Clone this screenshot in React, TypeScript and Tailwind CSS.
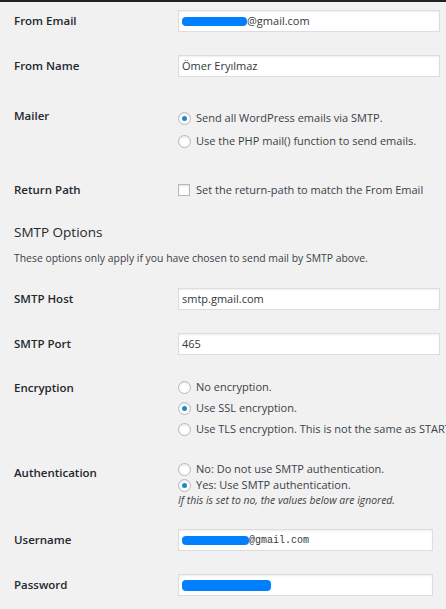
import React from 'react';

function Label({ children, className = '' }: { children: React.ReactNode; className?: string }) {
  return (
    <div className={`w-[178px] shrink-0 pl-[14px] text-[11.5px] font-semibold text-[#23282d] ${className}`}>
      {children}
    </div>
  );
}

function TextInput({ children, wide = true, mono = false }: { children: React.ReactNode; wide?: boolean; mono?: boolean }) {
  return (
    <div
      className={`h-[22px] ${wide ? 'w-[262px]' : 'w-[255px]'} shrink-0 bg-white border border-[#dddddd] shadow-[inset_0_1px_2px_rgba(0,0,0,0.07)] flex items-center px-[3px] whitespace-nowrap text-[#32373c] ${
        mono ? "font-['Liberation_Mono',monospace] text-[10px]" : 'text-[11px]'
      }`}
    >
      {children}
    </div>
  );
}

function Blot({ w, h = 9 }: { w: number; h?: number }) {
  return <span className="inline-block bg-[#0080ff] rounded-[4px]" style={{ width: w, height: h }} />;
}

function Radio({ checked, children, line }: { checked?: boolean; children: React.ReactNode; line: string }) {
  return (
    <div className={`flex items-center ${line} whitespace-nowrap`}>
      <span className="w-[13px] h-[13px] shrink-0 rounded-full bg-white border border-[#b4b9be] shadow-[inset_0_1px_2px_rgba(0,0,0,0.1)] flex items-center justify-center">
        {checked && <span className="w-[5px] h-[5px] rounded-full bg-[#1e8cbe]" />}
      </span>
      <span className="ml-[5px] text-[11px] text-[#3c4146]">{children}</span>
    </div>
  );
}

export default function App() {
  return (
    <div className="w-[446px] h-[609px] overflow-hidden bg-[#f1f1f1] border-t-2 border-[#222222] font-['Open_Sans',sans-serif] text-[#3c4146]">
      <div className="flex items-center mt-[8px]">
        <Label>From Email</Label>
        <TextInput>
          <Blot w={65} />
          <span>@gmail.com</span>
        </TextInput>
      </div>

      <div className="flex items-center mt-[23px]">
        <Label>From Name</Label>
        <TextInput>Ömer Eryılmaz</TextInput>
      </div>

      <div className="flex items-start mt-[30px]">
        <Label className="leading-[18px]">Mailer</Label>
        <div className="flex flex-col">
          <Radio checked line="h-[23px]">Send all WordPress emails via SMTP.</Radio>
          <Radio line="h-[23px]">Use the PHP mail() function to send emails.</Radio>
        </div>
      </div>

      <div className="flex items-center h-[22px] mt-[26px]">
        <Label>Return Path</Label>
        <div className="flex items-center whitespace-nowrap">
          <span className="w-[12px] h-[12px] shrink-0 bg-white border border-[#b4b9be] shadow-[inset_0_1px_2px_rgba(0,0,0,0.1)]" />
          <span className="ml-[6px] text-[11px]">Set the return-path to match the From Email</span>
        </div>
      </div>

      <h3 className="mt-[20px] pl-[14px] text-[13.5px] leading-[22px] text-[#23282d]">SMTP Options</h3>
      <p className="mt-[7px] pl-[14px] text-[10.4px] leading-[16px] whitespace-nowrap">
        These options only apply if you have chosen to send mail by SMTP above.
      </p>

      <div className="flex items-center mt-[22px]">
        <Label>SMTP Host</Label>
        <TextInput>smtp.gmail.com</TextInput>
      </div>

      <div className="flex items-center mt-[23px]">
        <Label>SMTP Port</Label>
        <TextInput>465</TextInput>
      </div>

      <div className="flex items-start mt-[22px]">
        <Label className="leading-[21px]">Encryption</Label>
        <div className="flex flex-col">
          <Radio line="h-[21px]">No encryption.</Radio>
          <Radio checked line="h-[21px]">Use SSL encryption.</Radio>
          <Radio line="h-[21px]">Use TLS encryption. This is not the same as STARTTLS.</Radio>
        </div>
      </div>

      <div className="flex items-start mt-[21px]">
        <Label className="leading-[24px]">Authentication</Label>
        <div className="flex flex-col">
          <Radio line="h-[16px]">No: Do not use SMTP authentication.</Radio>
          <Radio checked line="h-[16px]">Yes: Use SMTP authentication.</Radio>
          <p className="text-[10.4px] leading-[14px] italic whitespace-nowrap">
            If this is set to no, the values below are ignored.
          </p>
        </div>
      </div>

      <div className="flex items-center mt-[22px]">
        <Label>Username</Label>
        <TextInput wide={false} mono>
          <Blot w={67} />
          <span>@gmail.com</span>
        </TextInput>
      </div>

      <div className="flex items-center mt-[23px]">
        <Label>Password</Label>
        <TextInput wide={false}>
          <Blot w={89} h={11} />
        </TextInput>
      </div>
    </div>
  );
}
